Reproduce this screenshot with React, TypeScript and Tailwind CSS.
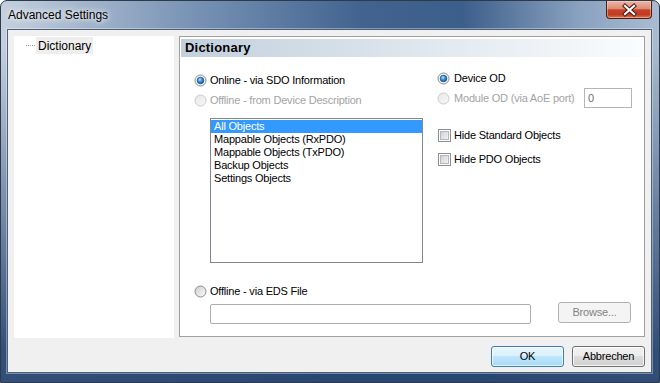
const LIST_ITEMS = [
  "All Objects",
  "Mappable Objects (RxPDO)",
  "Mappable Objects (TxPDO)",
  "Backup Objects",
  "Settings Objects",
];

function Radio({ checked = false, disabled = false }: { checked?: boolean; disabled?: boolean }) {
  const ring = disabled ? "#c9c9c9" : "#8b8b8b";
  return (
    <svg width="13" height="13" viewBox="0 0 13 13" className="shrink-0" aria-hidden="true">
      <defs>
        <linearGradient id="rb-off" x1="0" y1="0" x2="1" y2="1">
          <stop offset="0" stopColor="#cdcdcd" />
          <stop offset="1" stopColor="#fbfbfb" />
        </linearGradient>
        <linearGradient id="rb-dis" x1="0" y1="0" x2="1" y2="1">
          <stop offset="0" stopColor="#e6e6e6" />
          <stop offset="1" stopColor="#f9f9f9" />
        </linearGradient>
        <radialGradient id="rb-dot" cx="0.4" cy="0.35" r="0.7">
          <stop offset="0" stopColor="#b9e4ff" />
          <stop offset="0.45" stopColor="#3a98e6" />
          <stop offset="1" stopColor="#0d4f93" />
        </radialGradient>
      </defs>
      <circle cx="6.5" cy="6.5" r="5.5" fill={checked ? "#f3f3f3" : disabled ? "url(#rb-dis)" : "url(#rb-off)"} stroke={ring} />
      {checked && <circle cx="6.5" cy="6.5" r="3.3" fill="url(#rb-dot)" stroke="#1b4f82" strokeWidth="0.8" />}
    </svg>
  );
}

function Checkbox() {
  return (
    <svg width="13" height="13" viewBox="0 0 13 13" className="shrink-0" aria-hidden="true">
      <defs>
        <linearGradient id="cb-in" x1="0" y1="0" x2="1" y2="1">
          <stop offset="0" stopColor="#c9cdd3" />
          <stop offset="1" stopColor="#f7f7f7" />
        </linearGradient>
      </defs>
      <rect x="0.5" y="0.5" width="12" height="12" fill="#fdfdfd" stroke="#8e8f8f" />
      <rect x="2.5" y="2.5" width="8" height="8" fill="url(#cb-in)" stroke="#b4b8bd" />
    </svg>
  );
}

export default function App() {
  return (
    <div className="flex h-[383px] w-[660px] flex-col overflow-hidden rounded-t-[7px] border border-[#2c3a4b] bg-[linear-gradient(180deg,rgba(38,68,112,0)_12%,rgba(38,68,112,0.92)_92%),linear-gradient(90deg,#c4d0de_0%,#7691b3_30%,#41638e_55%,#3c5e8a_70%,#8aa2c0_88%,#aabcd1_100%)] font-['Liberation_Sans',Arial,sans-serif] text-[11px] tracking-[-0.2px] text-black">
      {/* title bar */}
      <div className="flex h-[28px] shrink-0">
        <div className="flex items-center pl-[7px] pb-[1px] text-[12px] tracking-normal [text-shadow:0_0_5px_#ffffff,0_0_9px_rgba(255,255,255,0.85)]">
          Advanced Settings
        </div>
        <div className="ml-auto mr-[7px] h-[18px] w-[46px] rounded-b-[4px] border border-t-0 border-[#4a1e15] bg-[linear-gradient(180deg,#ecb6a6_0%,#dd8d76_45%,#c4442b_52%,#c23a20_80%,#df764f_100%)] shadow-[inset_0_0_0_1px_rgba(255,220,210,0.45)]">
          <svg width="44" height="18" viewBox="0 0 44 18" aria-hidden="true">
            <path d="M18 5 L27 13 M27 5 L18 13" stroke="#4a1a12" strokeWidth="4.2" strokeLinecap="square" />
            <path d="M18 5 L27 13 M27 5 L18 13" stroke="#ffffff" strokeWidth="2.2" strokeLinecap="square" />
          </svg>
        </div>
      </div>

      {/* client area */}
      <div className="ml-[6px] mr-[7px] flex h-[344px] shrink-0 flex-col border border-[#4d6078] bg-[#f0f0f0] px-[6px] pt-[6px] shadow-[0_0_0_1px_rgba(255,255,255,0.35)]">
        <div className="flex gap-[5px]">
          {/* tree */}
          <div className="h-[302px] w-[160px] bg-white pt-[1px]">
            <div className="flex items-center pl-[12px]">
              <span className="h-0 w-[9px] border-t border-dotted border-[#9a9a9a]" />
              <span className="ml-[1px] flex h-[17px] items-center bg-[#eeeeee] px-[2px] text-[12px] tracking-normal">
                Dictionary
              </span>
            </div>
          </div>

          {/* settings panel */}
          <div className="flex h-[301px] w-[466px] flex-col border border-[#a0a0a0] bg-white">
            <div className="mx-[1px] mt-[2px] flex h-[18px] items-center bg-gradient-to-r from-[#c2d0dd] to-[#fbfcfd] pl-[4px] text-[13px] font-bold tracking-[0.2px]">
              Dictionary
            </div>

            <div className="flex">
              <div className="w-[257px] pl-[14px] pt-[13px]">
                <div className="flex h-[20px] items-center gap-[3px]">
                  <Radio checked />
                  <span>Online - via SDO Information</span>
                </div>
                <div className="flex h-[20px] items-center gap-[3px] text-[#a3a3a3]">
                  <Radio disabled />
                  <span>Offline - from Device Description</span>
                </div>
                <div className="ml-[16px] mt-[8px] h-[145px] w-[213px] border border-[#828790] bg-white pt-[1px]">
                  {LIST_ITEMS.map((item, i) => (
                    <div
                      key={item}
                      className={
                        i === 0
                          ? "h-[13px] bg-[#3399ff] pl-[3px] leading-[13px] text-white"
                          : "h-[13px] pl-[3px] leading-[13px]"
                      }
                    >
                      {item}
                    </div>
                  ))}
                </div>
              </div>

              <div className="pt-[11px]">
                <div className="flex h-[20px] items-center gap-[4px]">
                  <Radio checked />
                  <span>Device OD</span>
                </div>
                <div className="flex h-[20px] items-center">
                  <div className="flex w-[147px] items-center gap-[4px] text-[#a3a3a3]">
                    <Radio disabled />
                    <span>Module OD (via AoE port)</span>
                  </div>
                  <div className="flex h-[20px] w-[48px] items-center border border-[#b5b5b5] bg-white pl-[3px] text-[#6d6d6d]">
                    0
                  </div>
                </div>
                <div className="mt-[17px] flex h-[20px] items-center gap-[3px] pl-[1px]">
                  <Checkbox />
                  <span>Hide Standard Objects</span>
                </div>
                <div className="mt-[4px] flex h-[20px] items-center gap-[3px] pl-[1px]">
                  <Checkbox />
                  <span>Hide PDO Objects</span>
                </div>
              </div>
            </div>

            <div className="mt-[18px] flex h-[20px] items-center gap-[3px] pl-[14px]">
              <Radio />
              <span>Offline - via EDS File</span>
            </div>
            <div className="mt-[1px] flex items-start pl-[30px]">
              <div className="mt-[2px] h-[20px] w-[321px] rounded-[2px] border border-[#abadb3] bg-white" />
              <div className="ml-[27px] flex h-[21px] w-[73px] items-center justify-center rounded-[3px] border border-[#adb2b5] bg-[#f4f4f4] text-[#838383]">
                Browse...
              </div>
            </div>
          </div>
        </div>

        {/* dialog buttons */}
        <div className="mt-[8px] flex justify-end gap-[8px]">
          <div className="flex h-[21px] w-[73px] items-center justify-center rounded-[3px] border border-[#3c7fb1] bg-[linear-gradient(180deg,#eaf6fd_0%,#d9f0fc_50%,#bee6fd_50%,#a7d9f5_100%)] shadow-[inset_0_0_0_1px_rgba(255,255,255,0.7)]">
            OK
          </div>
          <div className="flex h-[21px] w-[73px] items-center justify-center rounded-[3px] border border-[#707070] bg-[linear-gradient(180deg,#f2f2f2_0%,#ebebeb_50%,#dddddd_50%,#cfcfcf_100%)] shadow-[inset_0_0_0_1px_rgba(255,255,255,0.8)]">
            Abbrechen
          </div>
        </div>
      </div>
    </div>
  );
}
